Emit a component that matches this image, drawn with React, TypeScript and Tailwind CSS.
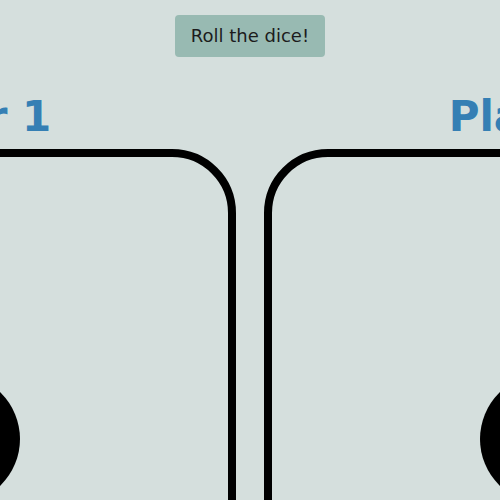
const PLAYERS = ["Player 1", "Player 2"];

function Die() {
  return (
    <div className="w-[562px] h-[572px] shrink-0 rounded-[64px] border-[8px] border-black flex items-center justify-center">
      <div className="w-[130px] h-[130px] rounded-full bg-black translate-y-[4px]" />
    </div>
  );
}

export default function App() {
  return (
    <div className="min-h-screen w-full overflow-hidden bg-[#d5dfdd] flex flex-col items-center font-['DejaVu_Sans',sans-serif]">
      <button className="mt-[15px] h-[42px] px-4 rounded-[4px] bg-[#98bab2] text-[18px] text-[#1c1c1c] leading-none">
        Roll the dice!
      </button>
      <div className="w-full flex justify-center gap-[28px] mt-[35px]">
        {PLAYERS.map((name) => (
          <div key={name} className="w-[562px] shrink-0 flex flex-col items-center">
            <h1 className="text-[42px] font-bold text-[#357fb4] leading-[49px] mb-[8px]">
              {name}
            </h1>
            <Die />
          </div>
        ))}
      </div>
    </div>
  );
}
